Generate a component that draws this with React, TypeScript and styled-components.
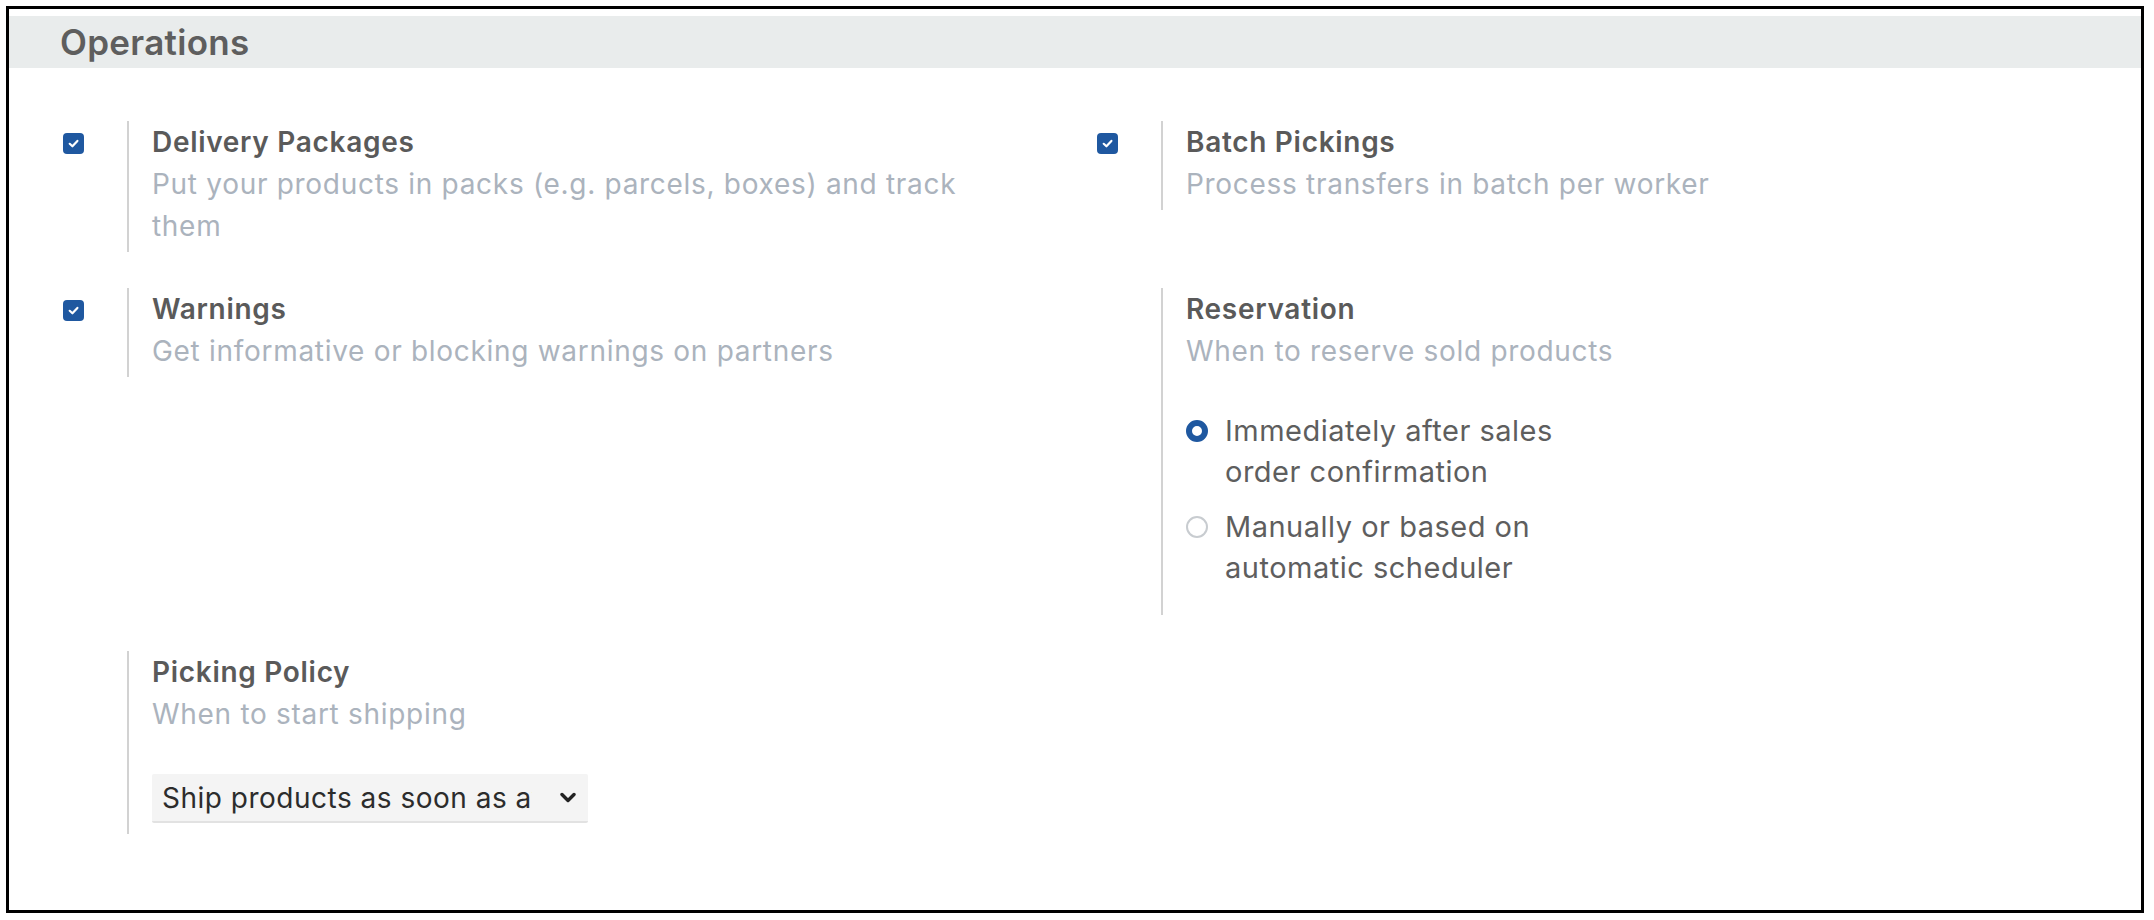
import React from "react"
import styled, { createGlobalStyle } from "styled-components"

const GlobalStyle = createGlobalStyle`
  body {
    margin: 0;
    background: #fff;
    font-family: Inter, "Open Sans", "DejaVu Sans", sans-serif;
  }
`

const Frame = styled.div`
  box-sizing: border-box;
  margin: 6px;
  width: 2138px;
  height: 907px;
  border: 3px solid #000;
  padding-top: 7px;
  background: #fff;
`

const SectionHeader = styled.h2`
  margin: 0;
  height: 52px;
  background: #e9ecec;
  padding-left: 51px;
  display: flex;
  align-items: center;
  font-size: 35px;
  letter-spacing: 0.3px;
  font-weight: 600;
  color: #5e5e5e;
`

const Grid = styled.div`
  display: grid;
  grid-template-columns: 1034px 1034px;
  row-gap: 36px;
  align-items: start;
  padding: 53px 0 0 54px;
`

const Setting = styled.div`
  display: flex;
`

const LeftPane = styled.div`
  width: 64px;
  flex: none;
  padding-top: 12px;
`

const RightPane = styled.div<{ $bottom?: number }>`
  border-left: 2px solid #d2d2d2;
  padding-left: 23px;
  padding-bottom: ${(p) => p.$bottom ?? 5}px;
  width: 850px;
`

const Title = styled.div`
  font-size: 28px;
  letter-spacing: 0.7px;
  line-height: 42px;
  font-weight: 600;
  color: #5a5a5a;
`

const Desc = styled.div`
  font-size: 28px;
  letter-spacing: 0.7px;
  line-height: 42px;
  color: #abb3bd;
`

const CheckBox = styled.span`
  display: flex;
  align-items: center;
  justify-content: center;
  width: 21px;
  height: 21px;
  border-radius: 4px;
  background: #1f58a0;
`

const RadioGroup = styled.div`
  margin-top: 38px;
  display: flex;
  flex-direction: column;
  gap: 14px;
`

const RadioOption = styled.label`
  display: flex;
  align-items: flex-start;
  gap: 17px;
`

const RadioDot = styled.span<{ $checked?: boolean }>`
  box-sizing: border-box;
  flex: none;
  width: 22px;
  height: 22px;
  margin-top: 10px;
  border-radius: 50%;
  background: #fff;
  border: ${(p) => (p.$checked ? "6px solid #1f58a0" : "2px solid #c8ccd0")};
`

const RadioLabel = styled.span`
  max-width: 360px;
  font-size: 29px;
  letter-spacing: 0.5px;
  line-height: 41px;
  color: #5e5e5e;
`

const SelectBox = styled.div`
  box-sizing: border-box;
  margin-top: 39px;
  width: 436px;
  height: 49px;
  display: flex;
  align-items: center;
  padding: 0 12px 0 10px;
  background: #f4f4f4;
  border-bottom: 2px solid #e2e2e2;
  border-radius: 2px;
`

const SelectText = styled.span`
  flex: 1;
  margin-right: 28px;
  overflow: hidden;
  white-space: nowrap;
  font-size: 28px;
  letter-spacing: 0.5px;
  color: #2c2c2c;
`

const Check = () => (
  <svg width="13" height="13" viewBox="0 0 12 12">
    <path d="M2.5 6.3 L5 8.6 L9.6 3.6" fill="none" stroke="#fff" strokeWidth="2" strokeLinecap="round" strokeLinejoin="round" />
  </svg>
)

const Chevron = () => (
  <svg width="16" height="11" viewBox="0 0 16 11">
    <path d="M2 2.5 L8 8.5 L14 2.5" fill="none" stroke="#222" strokeWidth="3.4" strokeLinecap="round" strokeLinejoin="round" />
  </svg>
)

interface ItemProps {
  title: string
  desc: string
  checked?: boolean
  bottom?: number
  children?: React.ReactNode
}

const Item = ({ title, desc, checked, bottom, children }: ItemProps) => (
  <Setting>
    <LeftPane>
      {checked && (
        <CheckBox>
          <Check />
        </CheckBox>
      )}
    </LeftPane>
    <RightPane $bottom={bottom}>
      <Title>{title}</Title>
      <Desc>{desc}</Desc>
      {children}
    </RightPane>
  </Setting>
)

export default function App() {
  return (
    <>
      <GlobalStyle />
      <Frame>
        <SectionHeader>Operations</SectionHeader>
        <Grid>
          <Item checked title="Delivery Packages" desc="Put your products in packs (e.g. parcels, boxes) and track them" />
          <Item checked title="Batch Pickings" desc="Process transfers in batch per worker" />
          <Item checked title="Warnings" desc="Get informative or blocking warnings on partners" />
          <Item title="Reservation" desc="When to reserve sold products" bottom={27}>
            <RadioGroup>
              <RadioOption>
                <RadioDot $checked />
                <RadioLabel>Immediately after sales order confirmation</RadioLabel>
              </RadioOption>
              <RadioOption>
                <RadioDot />
                <RadioLabel>Manually or based on automatic scheduler</RadioLabel>
              </RadioOption>
            </RadioGroup>
          </Item>
          <Item title="Picking Policy" desc="When to start shipping" bottom={11}>
            <SelectBox>
              <SelectText>Ship products as soon as available, with back orders</SelectText>
              <Chevron />
            </SelectBox>
          </Item>
        </Grid>
      </Frame>
    </>
  )
}
